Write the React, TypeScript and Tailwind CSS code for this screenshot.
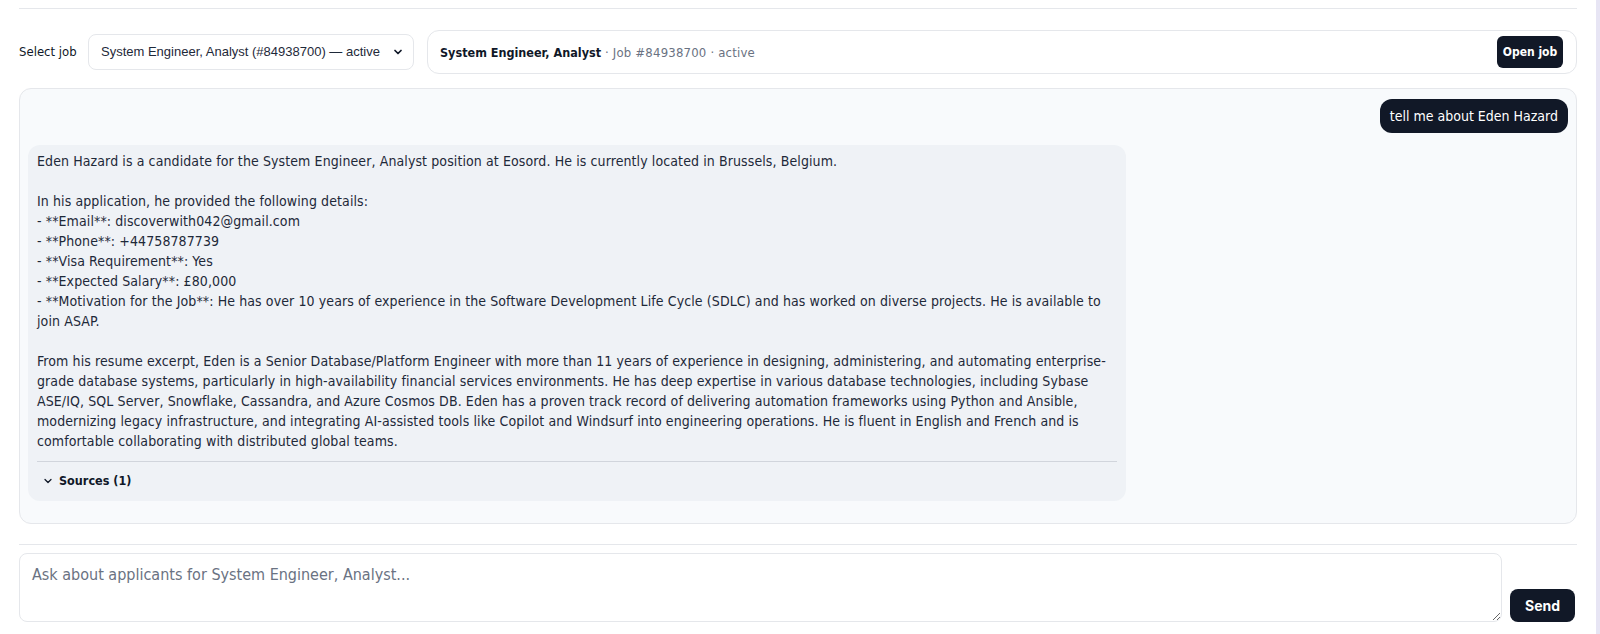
import React from "react";
import { ChevronDown } from "lucide-react";

const body = "font-['DejaVu_Sans_Condensed','DejaVu_Sans',sans-serif]";

const answerLines: string[] = [
  "Eden Hazard is a candidate for the System Engineer, Analyst position at Eosord. He is currently located in Brussels, Belgium.",
  "",
  "In his application, he provided the following details:",
  "- **Email**: discoverwith042@gmail.com",
  "- **Phone**: +44758787739",
  "- **Visa Requirement**: Yes",
  "- **Expected Salary**: £80,000",
  "- **Motivation for the Job**: He has over 10 years of experience in the Software Development Life Cycle (SDLC) and has worked on diverse projects. He is available to",
  "join ASAP.",
  "",
  "From his resume excerpt, Eden is a Senior Database/Platform Engineer with more than 11 years of experience in designing, administering, and automating enterprise-",
  "grade database systems, particularly in high-availability financial services environments. He has deep expertise in various database technologies, including Sybase",
  "ASE/IQ, SQL Server, Snowflake, Cassandra, and Azure Cosmos DB. Eden has a proven track record of delivering automation frameworks using Python and Ansible,",
  "modernizing legacy infrastructure, and integrating AI-assisted tools like Copilot and Windsurf into engineering operations. He is fluent in English and French and is",
  "comfortable collaborating with distributed global teams.",
];

function JobBar() {
  return (
    <div className="mt-[21px] flex items-center">
      <label className={`${body} w-[59px] text-[13px] text-gray-900`}>Select job</label>
      <div className="ml-[10px] flex h-9 w-[326px] items-center rounded-lg border border-gray-200 bg-white pl-3 pr-[9px] font-['Liberation_Sans',sans-serif] text-[13px] text-gray-800">
        <span className="flex-1 whitespace-nowrap">System Engineer, Analyst (#84938700) — active</span>
        <ChevronDown className="h-3 w-3 text-gray-900" strokeWidth={3.5} />
      </div>
      <div className="ml-[13px] flex h-11 flex-1 items-center rounded-xl border border-gray-200 bg-white pl-3 pr-[13px]">
        <div className={`${body} flex-1`}>
          <span className="text-[12.5px] font-bold text-gray-900">System Engineer, Analyst</span>
          <span className="text-[13px] tracking-[0.2px] text-gray-500"> · Job #84938700 · active</span>
        </div>
        <button className={`${body} h-8 w-[66px] rounded-md bg-[#111827] text-[12px] font-bold text-white`}>
          Open job
        </button>
      </div>
    </div>
  );
}

function ChatPanel() {
  return (
    <div className="mt-[14px] h-[436px] rounded-xl border border-gray-200 bg-[#f8fafc] px-2 pt-[10px]">
      <div className="flex justify-end">
        <div className={`${body} rounded-xl bg-[#111827] px-[10px] py-[7px] text-[14px] leading-5 text-white`}>
          tell me about Eden Hazard
        </div>
      </div>
      <div className={`${body} mt-3 w-[1098px] rounded-xl bg-[#eff2f6] px-[9px] pt-[6px] pb-[10px] text-[14px] leading-5 text-gray-800`}>
        <div className="tracking-[0.1px]">
          {answerLines.map((l, i) => (
            <div key={i} className="h-5 whitespace-nowrap">
              {l}
            </div>
          ))}
        </div>
        <div className="mt-[10px] flex items-center gap-[5px] border-t border-gray-300 px-[5px] pt-[9px] text-[12.5px] font-bold text-gray-900">
          <ChevronDown className="h-3 w-3" strokeWidth={2.5} />
          <span>Sources (1)</span>
        </div>
      </div>
    </div>
  );
}

function Composer() {
  return (
    <>
      <div className="mt-5 border-t border-gray-200" />
      <div className="mt-2 flex items-end gap-2">
        <textarea
          placeholder="Ask about applicants for System Engineer, Analyst..."
          className={`${body} h-[69px] flex-1 rounded-lg border border-gray-200 bg-white px-3 pt-[11px] text-[16px] leading-5 text-gray-800 placeholder:text-gray-500 outline-none`}
        />
        <button className="mr-[2px] h-[33px] w-[65px] rounded-lg bg-[#111827] font-['Inter',sans-serif] text-[14px] font-bold text-white">
          Send
        </button>
      </div>
    </>
  );
}

export default function App() {
  return (
    <div className="flex min-h-[634px] bg-white">
      <div className="flex-1 px-[19px] pt-2">
        <div className="border-t border-gray-200" />
        <JobBar />
        <ChatPanel />
        <Composer />
      </div>
      <div className="w-1 bg-[#e7e5f4]" />
    </div>
  );
}
